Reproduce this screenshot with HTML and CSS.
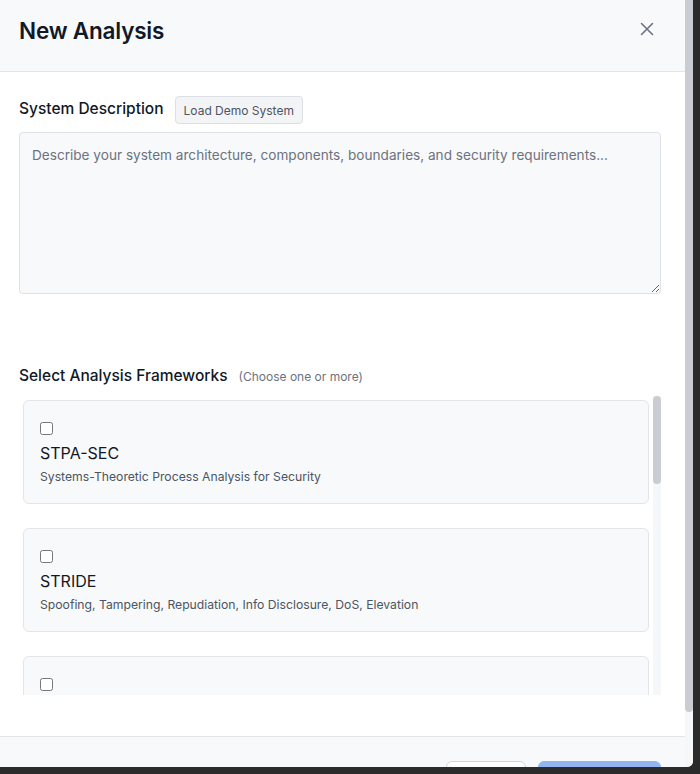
FILE: index.html
```html
<!DOCTYPE html>
<html lang="en">
<head>
<meta charset="utf-8">
<title>New Analysis</title>
<link rel="stylesheet" href="styles.css">
</head>
<body>
<div class="modal">
  <div class="modal-main">
    <header class="modal-header">
      <h2 class="modal-title">New Analysis</h2>
      <button class="close-btn" aria-label="Close">
        <svg width="14" height="14" viewBox="0 0 14 14"><path d="M1.5 1.5 L12.5 12.5 M12.5 1.5 L1.5 12.5" stroke="#6b7280" stroke-width="1.6" stroke-linecap="round" fill="none"/></svg>
      </button>
    </header>
    <div class="modal-body">
      <div class="label-row">
        <label class="field-label">System Description</label>
        <button class="demo-btn">Load Demo System</button>
      </div>
      <textarea class="desc-input" placeholder="Describe your system architecture, components, boundaries, and security requirements..."></textarea>

      <div class="label-row frameworks-label">
        <span class="field-label">Select Analysis Frameworks</span>
        <span class="hint">(Choose one or more)</span>
      </div>
      <div class="framework-box">
        <div class="framework-list">
          <label class="fw-card"><input type="checkbox"><span class="fw-name">STPA-SEC</span><span class="fw-desc">Systems-Theoretic Process Analysis for Security</span></label>
          <label class="fw-card"><input type="checkbox"><span class="fw-name">STRIDE</span><span class="fw-desc">Spoofing, Tampering, Repudiation, Info Disclosure, DoS, Elevation</span></label>
          <label class="fw-card"><input type="checkbox"><span class="fw-name">PASTA</span><span class="fw-desc">Process for Attack Simulation and Threat Analysis</span></label>
          <label class="fw-card"><input type="checkbox"><span class="fw-name">DREAD</span><span class="fw-desc">Damage, Reproducibility, Exploitability, Affected Users, Discoverability</span></label>
          <label class="fw-card"><input type="checkbox"><span class="fw-name">MAESTRO</span><span class="fw-desc">Multi-Agent Environment Security Threat Risk and Outcome</span></label>
          <label class="fw-card"><input type="checkbox"><span class="fw-name">LINDDUN</span><span class="fw-desc">Privacy threat modeling framework</span></label>
          <label class="fw-card"><input type="checkbox"><span class="fw-name">HAZOP</span><span class="fw-desc">Hazard and Operability Study</span></label>
          <label class="fw-card"><input type="checkbox"><span class="fw-name">OCTAVE</span><span class="fw-desc">Operationally Critical Threat, Asset, and Vulnerability Evaluation</span></label>
        </div>
        <div class="rail list-rail"><div class="thumb list-thumb"></div></div>
      </div>
    </div>
    <footer class="modal-footer">
      <button class="btn btn-secondary">Cancel</button>
      <button class="btn btn-primary" disabled>Start Analysis</button>
    </footer>
  </div>
  <div class="rail modal-rail"><div class="thumb modal-thumb"></div></div>
</div>
</body>
</html>
```

FILE: styles.css
```css
html, body {
  margin: 0;
  padding: 0;
}
body {
  background: #2b2b2b;
  height: 774px;
  overflow: hidden;
  font-family: Inter, "Noto Sans", "Liberation Sans", sans-serif;
  color: #111827;
}
.modal {
  width: 693px;
  height: 767px;
  background: #ffffff;
  border-radius: 0 0 6px 0;
  overflow: hidden;
  display: flex;
}
.modal-main {
  flex: 1;
  min-width: 0;
  overflow: hidden;
}
.rail {
  flex: 0 0 8px;
  width: 8px;
  background: #f6f7f8;
}
.thumb {
  width: 8px;
  background: #c9ccd1;
  border-radius: 4px;
}
.modal-thumb {
  height: 712px;
  border-radius: 0 0 4px 4px;
}
.list-thumb {
  height: 88px;
}

.modal-header {
  height: 72px;
  box-sizing: border-box;
  background: #f8f9fa;
  border-bottom: 1px solid #e2e4e7;
  display: flex;
  justify-content: space-between;
  align-items: flex-start;
  padding: 17px 26px 0 19px;
}
.modal-title {
  margin: 0;
  font-size: 22.5px;
  line-height: 28px;
  font-weight: 600;
  color: #111827;
  letter-spacing: -0.2px;
}
.close-btn {
  width: 24px;
  height: 24px;
  margin-top: 0;
  padding: 0;
  border: 0;
  background: transparent;
  display: flex;
  align-items: center;
  justify-content: center;
}

.modal-body {
  padding: 24px 24px 41px 19px;
}
.label-row {
  display: flex;
  align-items: center;
  height: 28px;
}
.field-label {
  font-size: 15.5px;
  line-height: 24px;
  font-weight: 500;
  color: #111827;
  margin-top: -2px;
}
.demo-btn {
  margin-left: 11px;
  height: 28px;
  padding: 0 8px;
  font-family: inherit;
  font-size: 12px;
  color: #4b5563;
  background: #f3f4f6;
  border: 1px solid #dcdfe3;
  border-radius: 4px;
}
.desc-input {
  display: block;
  margin-top: 8px;
  width: 642px;
  height: 162px;
  box-sizing: border-box;
  padding: 12px;
  font-family: inherit;
  font-size: 13.6px;
  line-height: 20px;
  color: #111827;
  background: #f8f9fa;
  border: 1px solid #dfe1e4;
  border-radius: 4px;
  resize: vertical;
}
.desc-input::placeholder { color: #6b7280; }

.frameworks-label {
  margin-top: 68px;
}
.frameworks-label .field-label {
  margin-top: 0;
}
.hint {
  margin-left: 11px;
  font-size: 12px;
  color: #6b7280;
}
.framework-box {
  margin-top: 6px;
  width: 642px;
  height: 299px;
  display: flex;
}
.framework-list {
  flex: 1;
  min-width: 0;
  box-sizing: border-box;
  padding: 4px;
  overflow: hidden;
  display: flex;
  flex-direction: column;
  gap: 24px;
}
.fw-card {
  flex: 0 0 auto;
  display: flex;
  flex-direction: column;
  align-items: flex-start;
  padding: 16px 16px 17px;
  background: #f8f9fa;
  border: 1px solid #e3e5e8;
  border-radius: 6px;
}
.fw-card input {
  margin: 5px 0 0 0;
  width: 13px;
  height: 13px;
}
.fw-name {
  margin-top: 6px;
  font-size: 16px;
  line-height: 24px;
  color: #111827;
}
.fw-desc {
  margin-top: 3px;
  font-size: 12.2px;
  line-height: 18px;
  color: #4b5563;
}

.modal-footer {
  background: #f8f9fa;
  border-top: 1px solid #e2e4e7;
  padding: 24px 24px 24px 19px;
  display: flex;
  justify-content: flex-end;
  gap: 12px;
}
.btn {
  height: 40px;
  padding: 0 16px;
  font-family: inherit;
  font-size: 14px;
  border-radius: 6px;
}
.btn-secondary {
  width: 80px;
  background: #ffffff;
  border: 1px solid #d1d5db;
  color: #374151;
}
.btn-primary {
  width: 123px;
  background: #93b4f3;
  border: 1px solid #93b4f3;
  color: #ffffff;
}
```
